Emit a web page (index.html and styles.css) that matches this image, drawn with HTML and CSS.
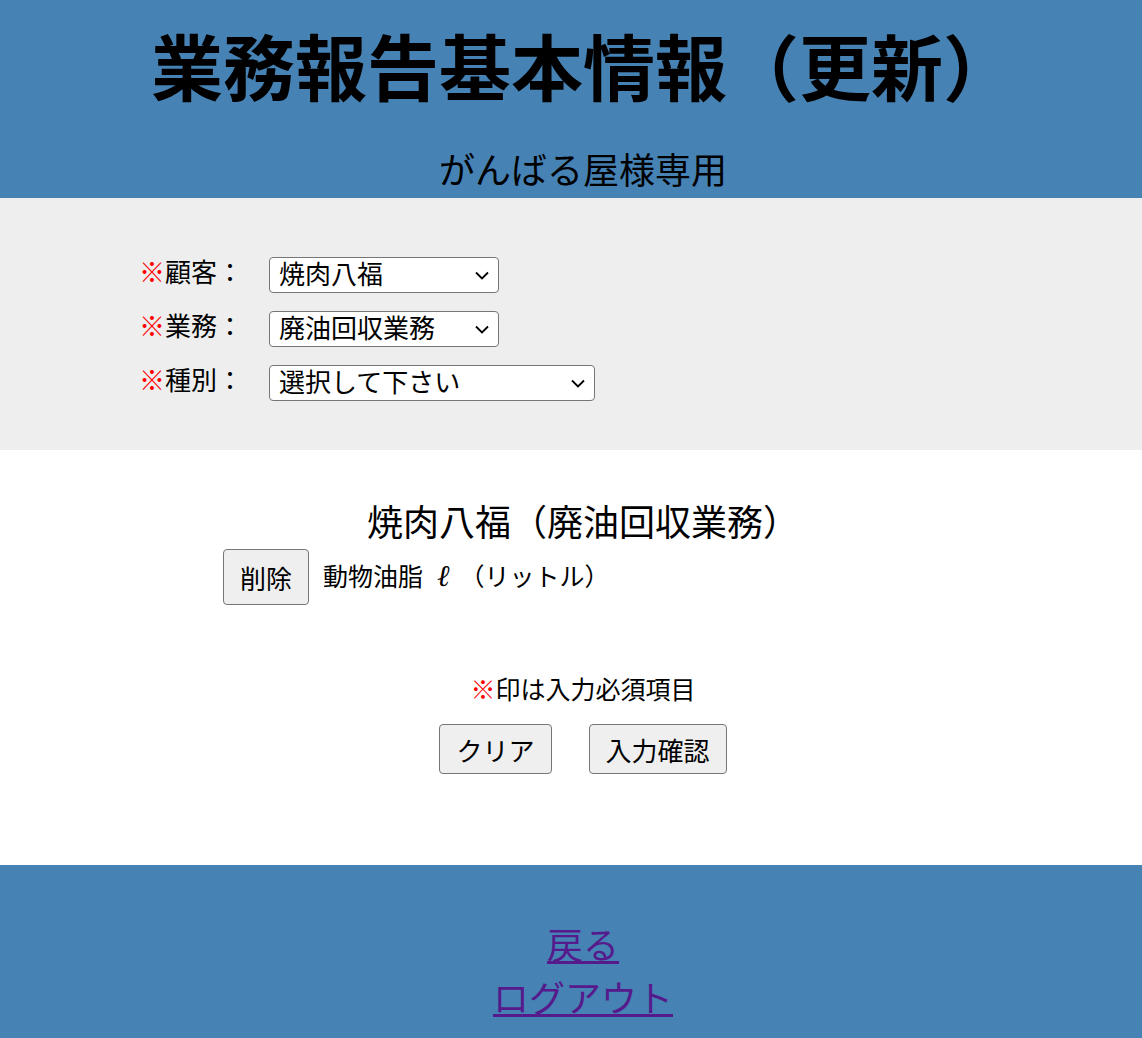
FILE: index.html
```html
<!DOCTYPE html>
<html lang="ja">
<head>
    <meta charset="UTF-8">
    <title>業務報告基本情報（更新）</title>
    <link rel="stylesheet" href="styles.css">
</head>
<body>
    <div class="header">
        <h1>業務報告基本情報（更新）</h1>
        <p class="sub-title">がんばる屋様専用</p>
    </div>

    <div class="form-area">
        <div class="form-row">
            <label class="form-label"><span class="req">※</span>顧客：</label>
            <span class="select-wrap">
                <select class="form-select">
                    <option>焼肉八福</option>
                </select>
                <svg class="chevron" width="14" height="9" viewBox="0 0 14 9"><path d="M1 1.5 L7 7.5 L13 1.5" fill="none" stroke="#000" stroke-width="1.8"/></svg>
            </span>
        </div>
        <div class="form-row">
            <label class="form-label"><span class="req">※</span>業務：</label>
            <span class="select-wrap">
                <select class="form-select">
                    <option>廃油回収業務</option>
                </select>
                <svg class="chevron" width="14" height="9" viewBox="0 0 14 9"><path d="M1 1.5 L7 7.5 L13 1.5" fill="none" stroke="#000" stroke-width="1.8"/></svg>
            </span>
        </div>
        <div class="form-row">
            <label class="form-label"><span class="req">※</span>種別：</label>
            <span class="select-wrap">
                <select class="form-select wide">
                    <option>選択して下さい</option>
                </select>
                <svg class="chevron" width="14" height="9" viewBox="0 0 14 9"><path d="M1 1.5 L7 7.5 L13 1.5" fill="none" stroke="#000" stroke-width="1.8"/></svg>
            </span>
        </div>
    </div>

    <div class="main-area">
        <div class="item-title">焼肉八福（廃油回収業務）</div>
        <div class="item-row">
            <button class="btn btn-delete">削除</button>
            <span class="item-name">動物油脂<i class="unit">ℓ</i>（リットル）</span>
        </div>

        <p class="note"><span class="req">※</span>印は入力必須項目</p>
        <div class="buttons">
            <button class="btn">クリア</button>
            <button class="btn">入力確認</button>
        </div>
    </div>

    <div class="footer">
        <a href="#back" class="foot-link">戻る</a>
        <a href="#logout" class="foot-link">ログアウト</a>
    </div>
</body>
</html>
```

FILE: styles.css
```css
body {
    margin: 0;
    font-family: "Noto Sans CJK JP", "Noto Sans", sans-serif;
    color: #000;
    background-color: #fff;
}
.header {
    background-color: #4682b4;
    text-align: center;
    height: 198px;
    overflow: hidden;
    padding-left: 24px;
}
.header h1 {
    margin: 0;
    padding-top: 18px;
    font-size: 72px;
    line-height: 92px;
    font-weight: bold;
}
.sub-title {
    margin: 38px 0 0;
    font-size: 36px;
    line-height: 40px;
}
.form-area {
    background-color: #eee;
    padding: 59px 0 49px 139px;
}
.form-row {
    display: flex;
    align-items: flex-start;
    height: 36px;
    margin-bottom: 18px;
}
.form-row:last-child {
    margin-bottom: 0;
}
.form-label {
    width: 130px;
    font-size: 26px;
    line-height: 28px;
}
.req {
    color: #f00;
}
.select-wrap {
    position: relative;
    display: inline-block;
}
.form-select {
    appearance: none;
    -webkit-appearance: none;
    width: 230px;
    height: 36px;
    padding: 0 0 4px 9px;
    font-family: inherit;
    font-size: 26px;
    line-height: 30px;
    color: #000;
    background-color: #fff;
    border: 1px solid #767676;
    border-radius: 4px;
}
.form-select.wide {
    width: 326px;
}
.chevron {
    position: absolute;
    right: 10px;
    top: 14px;
    pointer-events: none;
}
.main-area {
    height: 415px;
    padding-top: 46px;
    box-sizing: border-box;
}
.item-title {
    text-align: center;
    font-size: 36px;
    line-height: 48px;
    padding-left: 24px;
}
.item-row {
    display: flex;
    align-items: center;
    padding-left: 223px;
    margin-top: 5px;
}
.item-name {
    font-size: 25px;
    margin-left: 14px;
    padding-bottom: 4px;
}
.unit {
    display: inline-block;
    font-family: "DejaVu Serif", serif;
    font-size: 30px;
    line-height: 25px;
    margin: 0 10px 0 14px;
}
.btn {
    font-family: inherit;
    font-size: 26px;
    color: #000;
    background-color: #efefef;
    border: 1px solid #767676;
    border-radius: 4px;
    padding: 0 16px;
    height: 50px;
    cursor: pointer;
}
.btn-delete {
    height: 56px;
    padding: 0 16px;
}
.note {
    text-align: center;
    font-size: 25px;
    margin: 66px 0 0;
    padding-left: 24px;
    line-height: 34px;
}
.buttons {
    display: flex;
    justify-content: center;
    gap: 37px;
    margin-top: 19px;
    padding-left: 24px;
}
.footer {
    background-color: #4682b4;
    text-align: center;
    padding: 52px 0 20px 24px;
    min-height: 173px;
    box-sizing: border-box;
}
.foot-link {
    display: block;
    width: max-content;
    margin: 0 auto;
    font-size: 36px;
    line-height: 53px;
    color: #551a8b;
}
```
